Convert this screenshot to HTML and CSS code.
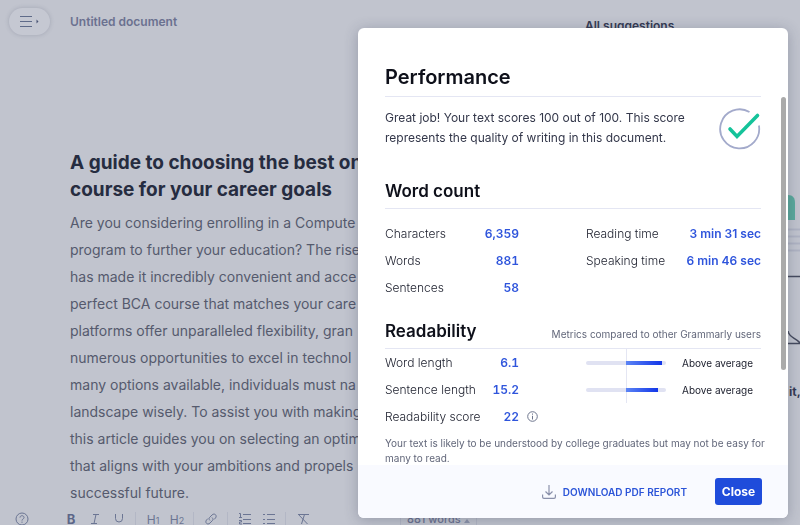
FILE: index.html
```html
<!DOCTYPE html>
<html lang="en">
<head>
    <meta charset="UTF-8">
    <meta name="viewport" content="width=device-width, initial-scale=1.0">
    <title>Untitled document</title>
    <link rel="stylesheet" href="styles.css">
</head>
<body>
    <div class="page">
        <main class="editor">
            <header class="topbar">
                <button type="button" class="menu-button" aria-label="Menu">
                    <svg width="20" height="12" viewBox="0 0 20 12" fill="none" stroke="#5f6b89">
                        <path d="M0 1.5h12M0 6.5h12M0 11.5h12"/>
                        <path d="M16.5 4.5v4l2-2z" fill="#4a5475" stroke="none"/>
                    </svg>
                </button>
                <span class="doc-title">Untitled document</span>
            </header>

            <article class="document">
                <h1>A guide to choosing the best on<br>course for your career goals</h1>
                <p>
                    Are you considering enrolling in a Compute<br>
                    program to further your education? The rise<br>
                    has made it incredibly convenient and acce<br>
                    perfect BCA course that matches your care<br>
                    platforms offer unparalleled flexibility, gran<br>
                    numerous opportunities to excel in technol<br>
                    many options available, individuals must na<br>
                    landscape wisely. To assist you with making<br>
                    this article guides you on selecting an optim<br>
                    that aligns with your ambitions and propels<br>
                    successful future.
                </p>
            </article>

            <footer class="toolbar">
                <button type="button" class="tool help" aria-label="Help">
                    <svg width="14" height="14" viewBox="0 0 14 14" fill="none" stroke="#6b7593">
                        <circle cx="7" cy="7" r="6"/>
                        <path d="M5 5.6c0-2.6 4-2.5 4 0C9 7 7 7 7 8.6M7 9.6v1.2"/>
                    </svg>
                </button>
                <button type="button" class="tool bold">B</button>
                <button type="button" class="tool" aria-label="Italic">
                    <svg width="10" height="12" viewBox="0 0 10 12" fill="none" stroke="#6b7593">
                        <path d="M3 1.5h6M1 10.5h6M6 1.5l-2 9"/>
                    </svg>
                </button>
                <button type="button" class="tool" aria-label="Underline">
                    <svg width="10" height="14" viewBox="0 0 10 14" fill="none" stroke="#6b7593">
                        <path d="M1.5 2v4.5a3.5 3.5 0 0 0 7 0V2M1 13.5h8"/>
                    </svg>
                </button>
                <span class="sep"></span>
                <button type="button" class="tool">H<small>1</small></button>
                <button type="button" class="tool">H<small>2</small></button>
                <span class="sep"></span>
                <button type="button" class="tool" aria-label="Link">
                    <svg width="12" height="12" viewBox="0 0 12 12" fill="none" stroke="#6b7593">
                        <path d="M5 7.5C3.5 6 4 5 5 4l2-2c2.5-2.5 5.5.5 3.5 3L9 6.5M7 4.5C8.5 6 8 7 7 8l-2 2c-2.5 2.5-5.5-.5-3.5-3L3 5.5"/>
                    </svg>
                </button>
                <span class="sep"></span>
                <button type="button" class="tool" aria-label="Numbered list">
                    <svg width="12" height="12" viewBox="0 0 12 12" fill="none" stroke="#6b7593">
                        <path d="M4 1.5h8M4 6.5h8M4 10.5h8M0 .5h1.5v4M0 4.5h3M0 7.5h2.5v1.5H.5v2h2.5"/>
                    </svg>
                </button>
                <button type="button" class="tool" aria-label="Bulleted list">
                    <svg width="12" height="12" viewBox="0 0 12 12" fill="none" stroke="#6b7593">
                        <path d="M4 1.5h8M4 6.5h8M4 10.5h8M0 1.5h2M0 6.5h2M0 10.5h2"/>
                    </svg>
                </button>
                <span class="sep"></span>
                <button type="button" class="tool" aria-label="Clear formatting">
                    <svg width="12" height="12" viewBox="0 0 12 12" fill="none" stroke="#6b7593">
                        <path d="M2 1.5h10M7.5 1.5l-3 9.5M1 1l9.5 10"/>
                    </svg>
                </button>
                <button type="button" class="words">881 words <svg width="6" height="4" viewBox="0 0 6 4"><path d="M0 4l3-4 3 4z" fill="#8c94ab"/></svg></button>
            </footer>
        </main>

        <aside class="sidebar">
            <h2>All suggestions</h2>
            <svg class="drawing" width="12" height="160" viewBox="0 0 12 160" fill="none">
                <path d="M0 5c5 0 7 3 7 8v17H0z" fill="#5aa99c"/>
                <path d="M0 39.5h12M0 46.5h12M0 53.5h12M0 60.5h12" stroke="#afb3c3" stroke-width="2"/>
                <path d="M0 86.5h12M0 153.5h12" stroke="#454a5e" stroke-width="1.5"/>
                <path d="M0 141c1 7 7 6 12 12" stroke="#454a5e" stroke-width="1.5"/>
            </svg>
            <p>it,</p>
        </aside>
    </div>

    <section class="modal" role="dialog" aria-labelledby="performance">
        <div class="modal-body">
            <h2 id="performance">Performance</h2>
            <div class="summary">
                <p>Great job! Your text scores 100 out of 100. This score represents the quality of writing in this document.</p>
                <svg width="42" height="42" viewBox="0 0 42 42" fill="none">
                    <path d="M30.5 4A19.5 19.5 0 1 0 39.9 17.5" stroke="#a3aacb" stroke-width="1.8"/>
                    <path d="M11 21l7 7.5L38.5 7.5" stroke="#15c39a" stroke-width="3.6" stroke-linecap="round"/>
                </svg>
            </div>

            <h3>Word count</h3>
            <table class="counts">
                <colgroup><col class="col-label"><col class="col-value"><col class="col-gap"><col class="col-meter"><col></colgroup>
                <tr><th>Characters</th><td class="value">6,359</td><td></td><th>Reading time</th><td class="value time">3 min 31 sec</td></tr>
                <tr><th>Words</th><td class="value">881</td><td></td><th>Speaking time</th><td class="value time">6 min 46 sec</td></tr>
                <tr><th>Sentences</th><td class="value">58</td><td></td><td></td><td></td></tr>
            </table>

            <div class="heading-row">
                <h3>Readability</h3>
                <span>Metrics compared to other Grammarly users</span>
            </div>
            <table class="readability">
                <colgroup><col class="col-label"><col class="col-value"><col class="col-gap"><col class="col-meter"><col></colgroup>
                <tr>
                    <th>Word length</th><td class="value">6.1</td><td></td>
                    <td class="meter-cell"><div class="meter"><span class="fill" style="width: 90%"></span></div></td>
                    <td class="verdict">Above average</td>
                </tr>
                <tr>
                    <th>Sentence length</th><td class="value">15.2</td><td></td>
                    <td class="meter-cell"><div class="meter"><span class="fill" style="width: 80%"></span></div></td>
                    <td class="verdict">Above average</td>
                </tr>
                <tr>
                    <th>Readability score</th><td class="value">22</td>
                    <td class="info">
                        <svg width="11" height="11" viewBox="0 0 11 11" fill="none" stroke="#6d758d">
                            <circle cx="5.5" cy="5.5" r="4.8"/>
                            <path d="M5.5 2.5v1.2M5.5 4.8v3.7"/>
                        </svg>
                    </td>
                    <td></td><td></td>
                </tr>
            </table>
            <p class="note">Your text is likely to be understood by college graduates but may not be easy for many to read.</p>
        </div>
        <div class="scroll-thumb"></div>
        <div class="modal-footer">
            <a href="#" class="download">
                <svg width="14" height="14" viewBox="0 0 14 14" fill="none" stroke="#8b91ab" stroke-width="1.2">
                    <path d="M7 0v9.5M3.5 6.5L7 10l3.5-3.5M.6 9.5v2.5q0 1.4 1.4 1.4h10q1.4 0 1.4-1.4V9.5"/>
                </svg>
                DOWNLOAD PDF REPORT
            </a>
            <button type="button" class="close">Close</button>
        </div>
    </section>
</body>
</html>
```

FILE: styles.css
```css
* {
    box-sizing: border-box;
}

body {
    margin: 0;
    height: 100vh;
    overflow: hidden;
    background-color: #c1c4ce;
    font-family: Inter, "Liberation Sans", sans-serif;
    font-size: 12px;
    color: #1a1d2b;
}

h1, h2, h3, p {
    margin: 0;
}

button {
    font-family: inherit;
    border: none;
    background: none;
    padding: 0;
}

.page {
    display: flex;
    justify-content: space-between;
}

.topbar {
    display: flex;
    align-items: center;
    gap: 20px;
    height: 42px;
    padding-left: 9px;
}

.menu-button {
    display: flex;
    align-items: center;
    justify-content: center;
    width: 41px;
    height: 27px;
    border-radius: 14px;
    background-color: #c5c8d2;
    box-shadow: 0 0 4px rgba(70, 78, 105, 0.25);
}

.doc-title {
    font-weight: 600;
    color: #6b7190;
}

/* document */
.document {
    padding: 107px 0 0 70px;
    white-space: nowrap;
}

.document h1 {
    font-size: 19px;
    line-height: 27px;
    font-weight: 700;
    color: #262c40;
    margin-bottom: 6px;
}

.document p {
    font-size: 14px;
    line-height: 27px;
    color: #555a6d;
}

.toolbar {
    display: flex;
    align-items: center;
    height: 26px;
    padding-left: 10px;
}

.tool {
    display: flex;
    align-items: baseline;
    justify-content: center;
    width: 24px;
    font-size: 12px;
    color: #6b7593;
}

.tool small {
    font-size: 9px;
}

.help {
    margin-right: 25px;
}

.bold {
    font-size: 13px;
    line-height: 12px;
    font-weight: 700;
    color: #5c6688;
}

.sep {
    width: 1px;
    height: 14px;
    margin: 0 5px 0 4px;
    background-color: #b3b7c5;
}

.words {
    margin-left: 85px;
    padding: 0 6px;
    border: 1px solid #b3b7c5;
    border-radius: 2px;
    font-size: 11px;
    line-height: 16px;
    font-weight: 500;
    color: #6b7190;
}

/* suggestions column */
.sidebar {
    display: flex;
    flex-direction: column;
    width: 215px;
    padding-top: 18px;
}

.sidebar h2 {
    font-size: 12px;
    line-height: 16px;
    font-weight: 600;
    color: #343a52;
}

.drawing {
    align-self: flex-end;
    margin-top: 156px;
}

.sidebar p {
    align-self: flex-end;
    width: 11px;
    margin-top: 34px;
    line-height: 16px;
    font-weight: 700;
    color: #343a52;
}

/* performance dialog */
.modal {
    position: fixed;
    top: 28px;
    right: 12px;
    bottom: 7px;
    width: 430px;
    display: flex;
    flex-direction: column;
    overflow: hidden;
    border-radius: 6px;
    background-color: #fff;
    box-shadow: 0 2px 14px rgba(50, 56, 84, 0.3);
}

.modal-body {
    flex: 1;
    min-height: 0;
    overflow: hidden;
    padding: 35px 27px 0;
}

.modal h2, .modal h3 {
    color: #0e101a;
    font-weight: 600;
    padding-bottom: 5px;
}

.modal h2 {
    font-size: 20px;
    line-height: 28px;
    border-bottom: 1px solid #e4e6f3;
}

.modal h3 {
    font-size: 17px;
    line-height: 24px;
}

.summary {
    display: flex;
    justify-content: space-between;
    margin: 11px 0 29px;
    line-height: 20px;
    color: #33374a;
}

.summary p {
    width: 310px;
}

.counts {
    border-top: 1px solid #e4e6f3;
    padding-top: 11px;
}

.heading-row {
    display: flex;
    justify-content: space-between;
    align-items: center;
    margin-top: 18px;
}

.heading-row span {
    font-size: 10px;
    color: #62677a;
}

.readability {
    border-top: 1px solid #e4e6f3;
}

table {
    width: 100%;
    table-layout: fixed;
    border-spacing: 0;
}

th, td {
    height: 27px;
    padding: 0;
    text-align: left;
    font-weight: 400;
    white-space: nowrap;
}

th {
    font-weight: 300;
}

.col-label {
    width: 96px;
}

.col-value {
    width: 38px;
}

.col-gap {
    width: 67px;
}

.col-meter {
    width: 80px;
}

td.value {
    text-align: right;
    font-weight: 600;
    font-variant-numeric: tabular-nums;
    color: #2f55dc;
}

td.time {
    font-variant-numeric: normal;
}

.info svg {
    display: block;
    margin-left: 8px;
}

.meter-cell {
    background: linear-gradient(#e4e6f3, #e4e6f3) center / 1px 100% no-repeat;
}

.meter {
    height: 4px;
    border-radius: 2px;
    padding-left: 50%;
    background-color: #e0e2f2;
}

.fill {
    display: block;
    height: 4px;
    background: linear-gradient(to right, #5b84f5, #1236e8);
}

td.verdict {
    padding-left: 16px;
    font-size: 10px;
}

.note {
    margin: 6px -10px 0 0;
    font-size: 10px;
    line-height: 15px;
    color: #62677a;
}

.scroll-thumb {
    position: absolute;
    top: 69px;
    right: 2px;
    width: 5px;
    height: 273px;
    border-radius: 3px;
    background-color: #aaa;
}

.modal-footer {
    display: flex;
    align-items: center;
    justify-content: flex-end;
    gap: 28px;
    height: 53px;
    padding: 0 26px;
    background-color: #f9faff;
}

.download {
    display: flex;
    align-items: center;
    gap: 7px;
    font-size: 10px;
    font-weight: 600;
    color: #2b54d8;
    text-decoration: none;
}

.close {
    width: 47px;
    height: 27px;
    border-radius: 3px;
    background-color: #1f4cdb;
    font-size: 12px;
    font-weight: 700;
    color: #fff;
}
```
